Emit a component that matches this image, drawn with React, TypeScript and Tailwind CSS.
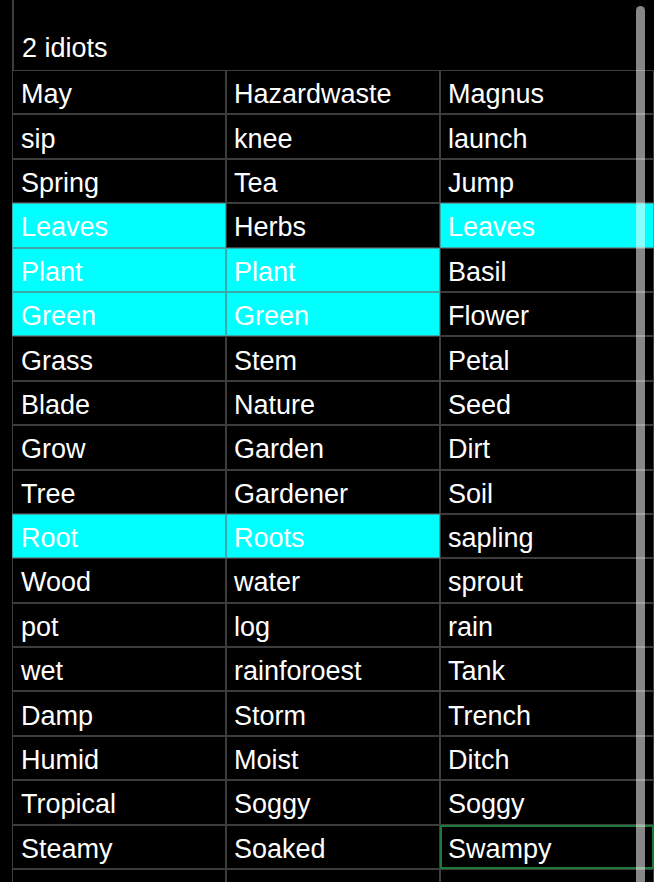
import React from "react";

type Cell = { t: string; hl?: boolean; sel?: boolean };

const rows: Cell[][] = [
  [{ t: "May" }, { t: "Hazardwaste" }, { t: "Magnus" }],
  [{ t: "sip" }, { t: "knee" }, { t: "launch" }],
  [{ t: "Spring" }, { t: "Tea" }, { t: "Jump" }],
  [{ t: "Leaves", hl: true }, { t: "Herbs" }, { t: "Leaves", hl: true }],
  [{ t: "Plant", hl: true }, { t: "Plant", hl: true }, { t: "Basil" }],
  [{ t: "Green", hl: true }, { t: "Green", hl: true }, { t: "Flower" }],
  [{ t: "Grass" }, { t: "Stem" }, { t: "Petal" }],
  [{ t: "Blade" }, { t: "Nature" }, { t: "Seed" }],
  [{ t: "Grow" }, { t: "Garden" }, { t: "Dirt" }],
  [{ t: "Tree" }, { t: "Gardener" }, { t: "Soil" }],
  [{ t: "Root", hl: true }, { t: "Roots", hl: true }, { t: "sapling" }],
  [{ t: "Wood" }, { t: "water" }, { t: "sprout" }],
  [{ t: "pot" }, { t: "log" }, { t: "rain" }],
  [{ t: "wet" }, { t: "rainforoest" }, { t: "Tank" }],
  [{ t: "Damp" }, { t: "Storm" }, { t: "Trench" }],
  [{ t: "Humid" }, { t: "Moist" }, { t: "Ditch" }],
  [{ t: "Tropical" }, { t: "Soggy" }, { t: "Soggy" }],
  [{ t: "Steamy" }, { t: "Soaked" }, { t: "Swampy", sel: true }],
  [{ t: "" }, { t: "" }, { t: "" }],
];

export default function App() {
  return (
    <div
      className="relative w-[654px] h-[882px] overflow-hidden bg-black text-white"
      style={{ fontFamily: '"Liberation Sans", Arial, sans-serif' }}
    >
      <div className="pl-[12px]">
        <div className="h-[70px] border-l-2 border-[#3d3d3d] flex items-end pb-[8px] pl-[8px] text-[27px] leading-none">
          2 idiots
        </div>
        <div className="grid grid-cols-[214px_214px_214px] w-[642px]">
          {rows.map((r, i) =>
            r.map((c, j) => (
              <div
                key={`${i}-${j}`}
                className={
                  "relative h-[44.4px] flex items-center pt-[5px] text-[27px] leading-none whitespace-nowrap border " +
                  (j === 0 ? "pl-[8px] " : "pl-[7px] ") +
                  (c.hl
                    ? "bg-[#00ffff] border-[#3aa9a9]"
                    : "bg-black border-[#3d3d3d]")
                }
              >
                {c.t}
                {c.sel && (
                  <div className="absolute -inset-[1px] border-2 border-[#1f7a3a]" />
                )}
              </div>
            ))
          )}
        </div>
      </div>
      <div className="absolute left-[636px] top-[6px] w-[9px] h-[900px] rounded-full bg-[rgba(255,255,255,0.53)]" />
    </div>
  );
}
